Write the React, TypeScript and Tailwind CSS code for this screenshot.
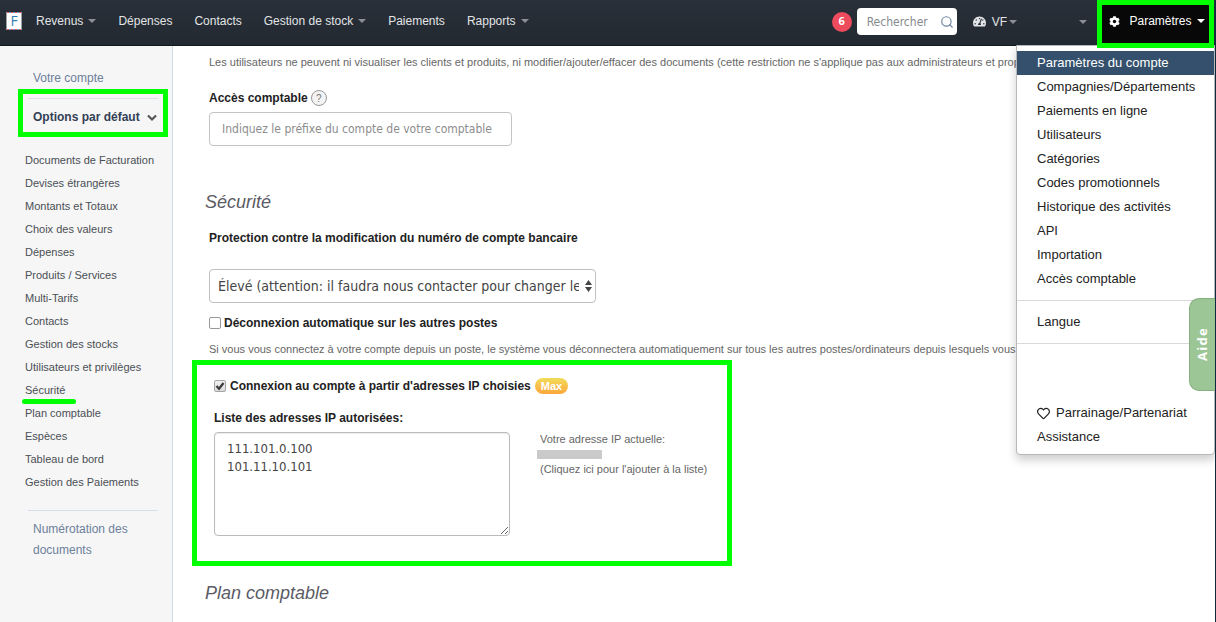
import { useState } from "react";
import { FaCog, FaTachometerAlt, FaRegHeart } from "react-icons/fa";
import { FiSearch } from "react-icons/fi";

const navItems = [
    { label: "Revenus", caret: true },
    { label: "Dépenses", caret: false },
    { label: "Contacts", caret: false },
    { label: "Gestion de stock", caret: true },
    { label: "Paiements", caret: false },
    { label: "Rapports", caret: true },
];

const sideItems = [
    "Documents de Facturation",
    "Devises étrangères",
    "Montants et Totaux",
    "Choix des valeurs",
    "Dépenses",
    "Produits / Services",
    "Multi-Tarifs",
    "Contacts",
    "Gestion des stocks",
    "Utilisateurs et privilèges",
    "Sécurité",
    "Plan comptable",
    "Espèces",
    "Tableau de bord",
    "Gestion des Paiements",
];

const menuItems = [
    "Paramètres du compte",
    "Compagnies/Départements",
    "Paiements en ligne",
    "Utilisateurs",
    "Catégories",
    "Codes promotionnels",
    "Historique des activités",
    "API",
    "Importation",
    "Accès comptable",
];

function Caret({ className = "text-[#8b9096]" }: { className?: string }) {
    return (
        <svg width="8" height="4" viewBox="0 0 8 4" className={`shrink-0 ${className}`} aria-hidden="true">
            <path d="M0 0h8L4 4z" fill="currentColor" />
        </svg>
    );
}

function Logo() {
    return (
        <a href="#" className="relative flex h-[18px] w-4 items-center justify-center bg-white font-['Open_Sans',sans-serif] text-sm leading-none text-[#2f7fb5]">
            <svg viewBox="0 0 16 18" className="absolute inset-0" aria-hidden="true">
                <path d="M1 .5h14M1 17.5h14" stroke="#e8505b" strokeDasharray="2 2" />
                <path d="M3 .5h12M3 17.5h12" stroke="#5fa8d8" strokeDasharray="2 2" />
                <path d="M.5 0v18M15.5 0v18" stroke="#9aa0a6" />
            </svg>
            F
        </a>
    );
}

function Header() {
    return (
        <header className="relative z-10 flex h-[46px] items-start border-b border-[#12171c] bg-linear-to-b from-[#293039] to-[#222931] pl-1.5 text-xs text-[#e2e4e6]">
            <div className="flex h-[41px] items-center gap-3.5">
                <Logo />
                <nav className="flex gap-[22px]">
                    {navItems.map((item) => (
                        <a key={item.label} href="#" className="flex items-center gap-[5px] whitespace-nowrap">
                            {item.label}
                            {item.caret && <Caret />}
                        </a>
                    ))}
                </nav>
            </div>

            <div className="ml-auto flex h-[43px] items-center">
                <span className="flex size-5 items-center justify-center rounded-full bg-[#ee4b5c] font-['Open_Sans',sans-serif] text-[11px] font-bold text-white">6</span>
                <label className="ml-[5px] flex h-[27px] w-[100px] items-center rounded bg-white pr-[3px] pl-2.5 text-[#6f86a0]">
                    <input type="search" aria-label="Rechercher" placeholder="Rechercher" className="w-full min-w-0 font-['DejaVu_Sans_Condensed','Noto_Sans',sans-serif] text-xs text-gray-700 outline-none placeholder:text-[#85898e]" />
                    <FiSearch size={14} className="shrink-0" />
                </label>
                <FaTachometerAlt size={13} className="ml-4" />
                <button className="ml-1.5 flex items-center gap-0.5">
                    VF <Caret />
                </button>
                <button aria-label="Compte" className="ml-[62px]">
                    <Caret />
                </button>
            </div>

            <button className="relative z-20 mr-px ml-2.5 flex h-12 w-[117px] items-center justify-between border-5 border-[#00ff00] bg-[#080808] pr-1 pb-1.5 pl-[7px] text-white">
                <FaCog size={11} />
                <span className="ml-1">Paramètres</span>
                <Caret className="text-white" />
            </button>

            <SettingsMenu />
        </header>
    );
}

function SettingsMenu() {
    return (
        <ul className="absolute top-[45px] right-0 w-[199px] rounded-b border border-[#b8b8b8] bg-white pt-[5px] pb-[5px] text-[13px] leading-6 text-[#222] shadow-[0_5px_10px_rgba(0,0,0,0.2)]">
            {menuItems.map((label, i) => (
                <li key={label}>
                    <a href="#" className={i === 0 ? "block bg-[#34506c] px-5 text-white" : "block px-5"}>
                        {label}
                    </a>
                </li>
            ))}
            <li className="mt-[9px] border-y border-[#d9d9d9] py-[9px]">
                <a href="#" className="block px-5">Langue</a>
            </li>
            <li className="mt-[57px]">
                <a href="#" className="flex items-center gap-1.5 px-5">
                    <FaRegHeart size={13} /> Parrainage/Partenariat
                </a>
            </li>
            <li>
                <a href="#" className="block px-5">Assistance</a>
            </li>
        </ul>
    );
}

function Sidebar() {
    return (
        <aside className="w-[173px] shrink-0 border-r border-[#d3dde5] bg-[#f6f6f6] pt-[22px] text-xs text-[#6d7f9b]">
            <a href="#" className="ml-[33px] block leading-5">Votre compte</a>

            <div className="mt-px mr-1 ml-[18px] border-5 border-[#00ff00] px-[5px] pt-1 pb-[5px]">
                <button className="flex w-full items-center justify-between border-t border-[#d8e0ea] pt-2 pl-[5px] text-left leading-5 font-bold whitespace-nowrap text-[#333f55]">
                    Options par défaut
                    <svg width="12" height="12" viewBox="0 0 12 12" fill="none" stroke="#555" strokeWidth="2.2" aria-hidden="true">
                        <path d="M2 4.5l4 4 4-4" />
                    </svg>
                </button>
            </div>

            <ul className="mt-3 ml-[25px] text-[11px] leading-[23px] whitespace-nowrap text-[#4a4f55]">
                {sideItems.map((label) => (
                    <li key={label} className="relative">
                        <a href="#">{label}</a>
                        {label === "Sécurité" && (
                            <span className="absolute -bottom-0.5 -left-[3px] h-[5px] w-[54px] rounded-sm bg-[#00ff00]" />
                        )}
                    </li>
                ))}
            </ul>

            <div className="mt-4 mr-3.5 ml-7 border-t border-[#d5deea] pt-2 pl-[5px]">
                <a href="#" className="block leading-[21px]">Numérotation des documents</a>
            </div>
        </aside>
    );
}

function IpAccess() {
    const [enabled, setEnabled] = useState(true);

    return (
        <section className="mt-[3px] ml-[19px] w-[540px] border-5 border-[#00ff00] pt-3 pb-[25px] pl-[17px]">
            <div className="flex h-[18px] items-center">
                <span className="relative mr-1 size-3">
                    <input
                        id="ip-only"
                        type="checkbox"
                        checked={enabled}
                        onChange={(e) => setEnabled(e.target.checked)}
                        className="absolute inset-0 size-3 appearance-none rounded-xs border border-[#a5a5a5] bg-linear-to-b from-[#f0f0f0] to-[#dcdcdc]"
                    />
                    {enabled && (
                        <svg viewBox="0 0 12 12" className="pointer-events-none absolute inset-0" fill="none" stroke="#3a3a3a" strokeWidth="2.2" aria-hidden="true">
                            <path d="M2.5 6l2.5 2.7L9.5 3" />
                        </svg>
                    )}
                </span>
                <label htmlFor="ip-only" className="text-xs font-bold text-[#222]">
                    Connexion au compte à partir d'adresses IP choisies
                </label>
                <span className="ml-1 flex h-4 items-center rounded-full bg-linear-to-b from-[#f0dc5a] to-[#fda63c] px-1.5 text-[11px] font-bold text-white">Max</span>
            </div>

            <label htmlFor="ip-list" className="mt-3.5 block text-xs leading-[18px] font-bold text-[#222]">
                Liste des adresses IP autorisées:
            </label>
            <div className="mt-[5px] flex">
                <textarea
                    id="ip-list"
                    defaultValue={"111.101.0.100\n101.11.10.101"}
                    className="h-[104px] w-[296px] rounded border border-[#bbb] px-3 py-[7px] font-['DejaVu_Sans_Condensed','Noto_Sans',sans-serif] text-[13px] leading-[18px] text-[#444] shadow-[inset_0_1px_1px_rgba(0,0,0,0.08)]"
                />
                <div className="ml-[30px] text-[11px] leading-[15px] text-[#666]">
                    <p>Votre adresse IP actuelle:</p>
                    <div className="my-[3px] -ml-[3px] h-[9px] w-[65px] bg-[#cacaca]" />
                    <a href="#">(Cliquez ici pour l'ajouter à la liste)</a>
                </div>
            </div>
        </section>
    );
}

function Settings() {
    return (
        <main className="min-w-0 flex-1 overflow-hidden bg-white pt-2">
            <div className="pl-9">
                <p className="mr-[199px] overflow-hidden text-[11px] leading-4 whitespace-nowrap text-[#666]">
                    Les utilisateurs ne peuvent ni visualiser les clients et produits, ni modifier/ajouter/effacer des documents (cette restriction ne s'applique pas aux administrateurs et propriétaires)
                </p>
                <div className="mt-[19px] flex h-[18px] items-center gap-[3px]">
                    <label htmlFor="accountant" className="text-xs font-bold text-[#222]">Accès comptable</label>
                    <button aria-label="Aide sur l'accès comptable" className="flex size-4 items-center justify-center rounded-full border border-[#999] bg-[#f4f4f4] text-[10px] text-[#777]">?</button>
                </div>
                <input
                    id="accountant"
                    type="text"
                    placeholder="Indiquez le préfixe du compte de votre comptable"
                    className="mt-[5px] block h-[34px] w-[303px] rounded border border-[#c4c4c4] px-3 font-['DejaVu_Sans_Condensed','Noto_Sans',sans-serif] text-xs placeholder:text-[#8d8d8d]"
                />
            </div>

            <h2 className="mt-[42px] pl-8 text-lg leading-7 text-[#5a5b64] italic">Sécurité</h2>

            <div className="pl-9">
                <label htmlFor="protection" className="mt-[13px] block text-xs leading-[18px] font-bold text-[#222]">
                    Protection contre la modification du numéro de compte bancaire
                </label>
                <div className="relative mt-[22px] w-[387px]">
                    <select id="protection" className="block h-[34px] w-full appearance-none rounded border border-[#c0c0c0] bg-white pr-4 pl-2 font-['DejaVu_Sans_Condensed','Noto_Sans',sans-serif] text-sm text-[#444]">
                        <option>Élevé (attention: il faudra nous contacter pour changer le numéro)</option>
                    </select>
                    <svg width="7" height="12" viewBox="0 0 7 12" fill="#444" className="pointer-events-none absolute top-[11px] right-1" aria-hidden="true">
                        <path d="M0 5l3.5-5L7 5zM0 7h7l-3.5 5z" />
                    </svg>
                </div>
                <div className="mt-[11px] flex h-[18px] items-center gap-[3px]">
                    <input id="auto-logout" type="checkbox" className="size-3 appearance-none rounded-xs border border-[#999] bg-white checked:bg-[#666]" />
                    <label htmlFor="auto-logout" className="text-xs font-bold text-[#222]">Déconnexion automatique sur les autres postes</label>
                </div>
                <p className="mt-[9px] mr-[199px] overflow-hidden text-[11px] leading-4 whitespace-nowrap text-[#666]">
                    Si vous vous connectez à votre compte depuis un poste, le système vous déconnectera automatiquement sur tous les autres postes/ordinateurs depuis lesquels vous vous êtes connecté
                </p>
            </div>

            <IpAccess />

            <h2 className="mt-[13px] pl-8 text-lg leading-7 text-[#5a5b64] italic">Plan comptable</h2>
        </main>
    );
}

export default function App() {
    return (
        <div className="relative flex min-h-screen flex-col overflow-hidden border-r border-[#0e2b3d] bg-white font-['Liberation_Sans',Arial,sans-serif]">
            <Header />
            <div className="flex flex-1">
                <Sidebar />
                <Settings />
            </div>

            {/* Help tab, stays over the menu */}
            <button className="absolute top-[298px] right-0 z-30 flex h-[93px] w-[26px] items-center justify-center rounded-l-[10px] border border-r-0 border-[#86b07f] bg-[#97c38f]/95">
                <span className="rotate-180 font-['Open_Sans',sans-serif] text-[13px] font-bold tracking-widest text-white [writing-mode:vertical-rl]">Aide</span>
            </button>
        </div>
    );
}
